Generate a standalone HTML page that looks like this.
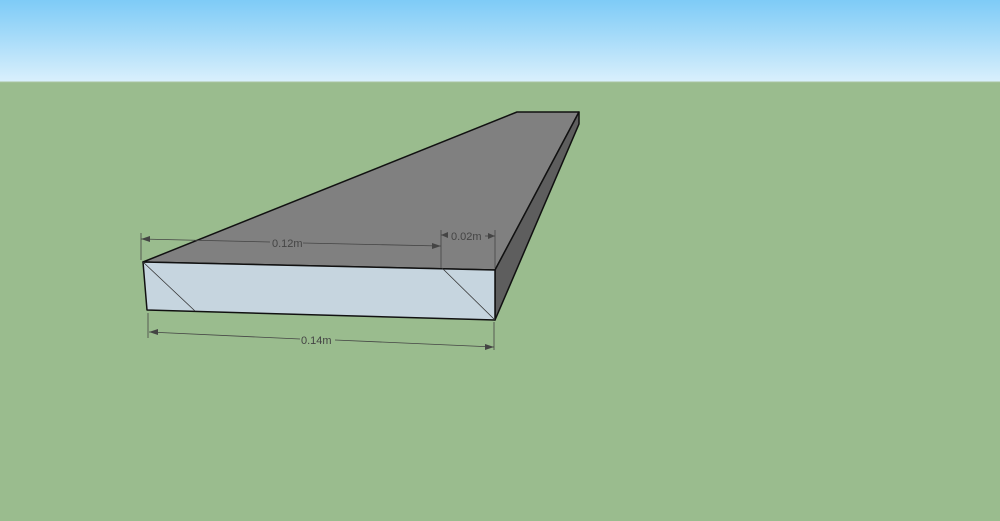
<!DOCTYPE html>
<html><head><meta charset="utf-8"><style>
html,body{margin:0;padding:0;width:1000px;height:521px;overflow:hidden;background:#9abc8e}
.sky{position:absolute;left:0;top:0;width:1000px;height:82px;background:linear-gradient(#7ecbf7,#a6dbf9 45%,#daf0fc)}
svg{position:absolute;left:0;top:0}
</style></head><body>
<div class="sky"></div>
<svg width="1000" height="521" viewBox="0 0 1000 521">
<line x1="0" y1="82" x2="1000" y2="82" stroke="#a9c4a0" stroke-width="1"/>
<!-- top face -->
<polygon points="143,262 517,112 579,112 495,270" fill="#808080" stroke="#111" stroke-width="1.5" stroke-linejoin="round"/>
<!-- right face -->
<polygon points="495,270 579,112 579,124 495,320" fill="#5e5e5e" stroke="#111" stroke-width="1.5" stroke-linejoin="round"/>
<!-- front face -->
<polygon points="143,262 495,270 495,320 147,310" fill="#c6d5df" stroke="#111" stroke-width="1.5" stroke-linejoin="round"/>
<line x1="143" y1="262" x2="195" y2="311" stroke="#333" stroke-width="0.8"/>
<line x1="442" y1="268" x2="495" y2="320" stroke="#333" stroke-width="0.8"/>
<g stroke="#444" stroke-width="0.8" fill="none">
<line x1="141" y1="233" x2="141" y2="260"/>
<line x1="441" y1="230" x2="441" y2="268"/>
<line x1="495" y1="230" x2="495" y2="268"/>
<line x1="141" y1="239" x2="270" y2="242"/>
<line x1="303" y1="243" x2="441" y2="246"/>
<line x1="441" y1="235" x2="448" y2="235"/>
<line x1="485" y1="236" x2="495" y2="236"/>
<line x1="148" y1="313" x2="148" y2="338"/>
<line x1="494" y1="322" x2="494" y2="350"/>
<line x1="149" y1="332" x2="300" y2="339"/>
<line x1="335" y1="340" x2="494" y2="347"/>
</g>
<g fill="#444">
<polygon points="141,239 150,236 150,242"/>
<polygon points="441,246 432,243 432,249"/>
<polygon points="441,235 448,232 448,238"/>
<polygon points="495,236 488,233 488,239"/>
<polygon points="149,332 158,329 158,335"/>
<polygon points="494,347 485,344 485,350"/>
</g>
<g font-family="Liberation Sans, sans-serif" font-size="11" fill="#444">
<text x="272" y="247">0.12m</text>
<text x="451" y="240">0.02m</text>
<text x="301" y="344">0.14m</text>
</g>
</svg>
</body></html>
